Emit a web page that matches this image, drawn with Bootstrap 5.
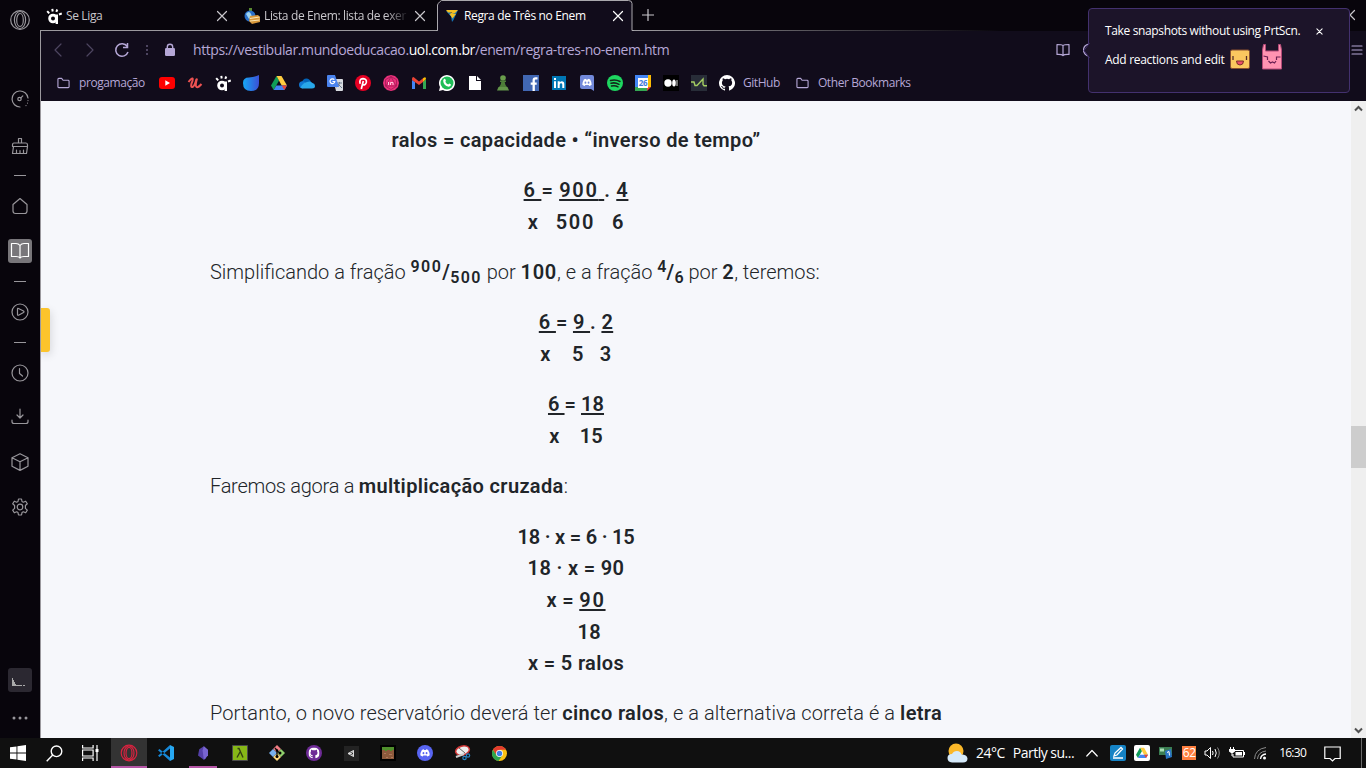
<!DOCTYPE html>
<html lang="pt-BR">
<head>
<meta charset="utf-8">
<meta name="viewport" content="width=device-width, initial-scale=1">
<title>Regra de Três no Enem</title>
<link href="https://cdn.jsdelivr.net/npm/bootstrap@5.3.0/dist/css/bootstrap.min.css" rel="stylesheet">
<style>
body{width:1366px;height:768px;overflow:hidden;background:#08050c;font-family:"Open Sans","Noto Sans",sans-serif;font-size:12px;line-height:16px;letter-spacing:-.36px;color:#fff}
svg{display:block;flex:none}
.ln{fill:none;stroke:currentColor;stroke-width:1.2;stroke-linecap:round;stroke-linejoin:round}
.shell{height:738px}
.rail{width:40px;padding:8px 0 8px 8px;color:#98969b;flex:none}
.rail .it{width:24px;height:24px;display:grid;place-items:center;border-radius:3px;flex:none}
.rail .dash{width:12px;height:1px;background:#98969b;margin:17px 0 18px 6px;flex:none}
.rail .dash.lo{margin-top:18px}
.rail .on{background:#78767a;color:#fff}
.rail .snap{background:#2b2831;color:#aaa}
.g14{margin-top:14px}.g19{margin-top:19px}.g21{margin-top:21px}.g22{margin-top:22px}.g23{margin-top:23px}.g55{margin-top:55px}
.win{width:1326px}
.tabstrip{height:30px;color:#c9c7cc}
.edge{height:1px;background:linear-gradient(90deg,#9b999e 0,#9b999e 600px,transparent 960px)}
.tb{width:198px;height:30px;white-space:nowrap;padding:1px 10px 0 6px}
.tb.cur{width:197px;padding:1px 9px 0 8px;position:relative;z-index:1;color:#fff}
.tb.cur .bgd{position:absolute;left:0;top:0}
.tb.cur>:not(.bgd){position:relative}
.fade-t{width:145px;overflow:hidden;-webkit-mask-image:linear-gradient(90deg,#000 122px,transparent 145px)}
.newtab{padding-left:9px}
.closewin{padding-right:10px}
.frame{border-left:1px solid #9b999e;flex:1;min-height:0}
.addr{height:39px;background:#110c1b;color:#b5a7d6;font-size:14px;letter-spacing:-.4px;padding:0 3px 2px 9px}
.addr .dim{color:#4d4560}
.url{margin-left:17px}
.camera{margin-left:13px}
.menu-ic{margin-left:254px}
.marks{height:31px;background:#110c1b;color:#b5a7d6;padding:0 0 5px 16px;gap:12px;letter-spacing:-.42px}
.marks .lbl{padding-left:9px}
.first-f{margin-right:2px}.last-f{margin-left:4px}
.page{flex:1;min-height:0;background:#f6f7fb}
.view{flex:1;overflow:hidden;position:relative}
.article{margin:23.6px 0 0 169px;width:732px;font-family:Roboto,"Liberation Sans",sans-serif;font-size:20px;line-height:31.6px;letter-spacing:0;font-weight:300;color:#212529;white-space:nowrap}
.article p{margin:0 0 18.8px}
.article b{font-weight:600;letter-spacing:.35px}
.article u{text-underline-offset:2px;text-decoration-thickness:2px;white-space:pre;text-decoration-skip-ink:none}
.article .dg{letter-spacing:.7px}
.article .wide{letter-spacing:1.7px}
.article .tight{letter-spacing:-.2px}
.article .snug{letter-spacing:-.27px}
.article .loose{letter-spacing:.07px}
.article sup,.article sub{font-size:16px;letter-spacing:1.4px}
.article .one sup,.article .one sub{letter-spacing:0}
.article sup{top:-7px}.article sub{bottom:-4px}
.handle{position:absolute;left:0;top:207px;width:9px;height:44px;background:#fcc42c;border-radius:0 3px 3px 0;box-shadow:1px 3px 9px #0002}
.sbar{width:15px;background:#efefef;color:#505050;padding:4px 0 4px}
.thumb{height:42px;background:#cdcdcd;margin-top:314px}
.pop{position:absolute;left:1088px;top:8px;width:262px;height:85px;background:#1c1429;border:1px solid #43316e;border-radius:4px;padding:14px 16px;z-index:5}
.pop .notch{position:absolute;left:-6px;top:33px}
.pop .row2{margin-top:5px}
.pop .row2 span{padding-bottom:2px;letter-spacing:-.3px;margin-right:5px}
.pop .imp{margin-left:10px}
.task{height:30px;background:#101010}
.ti{width:36px;height:30px;display:grid;place-items:center;margin-right:1px;position:relative;flex:none}
.ti.sys{margin-right:0}
.ti.sys.last-s{margin-right:3px}
.ti.act{background:#333;box-shadow:inset 0 -2px #b455a5}
.ti.run::after{content:"";position:absolute;left:4px;width:28px;bottom:0;height:2px;background:#b455a5}
.wx{font-size:14px;letter-spacing:-.5px}
.clock{letter-spacing:-.75px;margin:0 10px 0 2px}
.num{background:#ff7f3f;width:14px;height:14px;line-height:14px;text-align:center}
.tray{gap:8px}
.desk{width:5px;height:30px;border-left:1px solid #6a6a6a;margin-left:12px}
</style>
</head>
<body class="d-flex flex-column position-relative">
<svg class="d-none">
<symbol id="x" viewBox="0 0 12 12"><path class="ln" d="M1.500 1.500l9 9M10.500 1.500l-9 9"/></symbol>
<symbol id="liga" viewBox="0 0 16 16"><circle cx="7" cy="10.500" r="3.400" fill="none" stroke="#fff" stroke-width="2.800"/><path d="M9.600 6.500h2.400V16H9.600z" fill="#fff"/><path d="M1.200 3.200l2 2.200M6.300.8l.4 2.700M11.300 1.500l-1 2.300M13 6.500l2.800-1" stroke="#fff" stroke-width="2"/></symbol>
<symbol id="folder" viewBox="0 0 14 12"><path class="ln" d="M1 10V2q0-1 1-1h3l1.500 2H12q1 0 1 1v6q0 1-1 1H2q-1 0-1-1z"/></symbol>
<symbol id="disc" viewBox="0 0 16 12"><path fill="#fff" d="M3 1Q5 0 6 0l.6 1h2.800L10 0q1.500.1 3 1 2.500 4 2.500 8.500Q14 11 11.500 11.500L10.700 10H5.300l-.8 1.500Q2 11 .5 9.500.5 5 3 1z"/><ellipse cx="5.500" cy="6.200" rx="1.500" ry="1.700" fill="var(--eye)"/><ellipse cx="10.500" cy="6.200" rx="1.500" ry="1.700" fill="var(--eye)"/></symbol>
<symbol id="drive" viewBox="0 0 16 14"><path fill="#0f9d58" d="M5.500 0L0 9.500 2.700 14 8 4.500z"/><path fill="#ffcd40" d="M5.500 0h5L16 9.500h-5.300z"/><path fill="#4285f4" d="M2.700 14l2.600-4.500H16L13.400 14z"/><path fill="#ea4335" d="M10.700 9.500H16L13.400 14z"/></symbol>
<symbol id="git" viewBox="0 0 16 16"><path d="M8 0a8 8 0 0 0-2.530 15.590c.4.07.55-.17.55-.38v-1.490c-2.010.37-2.530-.49-2.690-.94-.09-.23-.48-.94-.82-1.130-.28-.15-.68-.52-.01-.53.63-.01 1.080.58 1.230.82.72 1.210 1.870.87 2.330.66.07-.52.28-.87.51-1.070-1.780-.2-3.640-.89-3.640-3.950 0-.87.31-1.590.82-2.150-.08-.2-.36-1.020.08-2.120 0 0 .67-.21 2.200.82a7.500 7.500 0 0 1 4 0c1.530-1.040 2.200-.82 2.200-.82.44 1.100.16 1.920.08 2.120.51.56.82 1.270.82 2.150 0 3.070-1.870 3.750-3.650 3.950.29.25.54.73.54 1.480v2.190c0 .21.15.46.55.38A8 8 0 0 0 8 0z" fill="#fff"/></symbol>
</svg>

<div class="shell d-flex">
  <nav class="rail d-flex flex-column">
    <div class="it"><svg width="20" height="20" viewBox="0 0 20 20" class="ln"><circle cx="10" cy="10" r="9.300"/><ellipse cx="10" cy="10" rx="5.600" ry="8.500"/><ellipse cx="10" cy="10" rx="3.300" ry="6.500"/></svg></div>
    <div class="it g55"><svg width="18" height="18" viewBox="0 0 18 18" class="ln"><path d="M9 17A8 8 0 1 1 17 8"/><path d="M17 10.500v.1M16.500 13v.1M15 15.500v.1"/><circle cx="8.500" cy="9" r="1.700"/><path d="M9.800 7.800l2-2"/></svg></div>
    <div class="it g23"><svg width="18" height="18" viewBox="0 0 18 18" class="ln"><path d="M7.500 6V1.500h3V6M3 6h12q1.500 0 1.500 2v1.500h-15V8Q1.500 6 3 6zM2.500 9.500L1.500 16.500h14l1-7M5.500 13v3.500M9 13.500v3M12.500 13v3.500"/></svg></div>
    <div class="dash"></div>
    <div class="it"><svg width="18" height="18" viewBox="0 0 18 18" class="ln"><path d="M2 7.500L9 1.500l7 6V14q0 2.500-2.500 2.500h-9Q2 16.500 2 14z"/></svg></div>
    <div class="it on g21"><svg width="20" height="18" viewBox="0 0 20 18" class="ln"><path d="M10 3.500Q8.500 1.500 6 1.500H1.500v13H6q3 0 4 1.500 1-1.500 4-1.500h4.500v-13H14q-2.500 0-4 2zV16"/></svg></div>
    <div class="dash lo"></div>
    <div class="it"><svg width="18" height="18" viewBox="0 0 18 18" class="ln"><circle cx="9" cy="9" r="8"/><path d="M6.500 6Q6.500 5 7.500 5.500L12.500 8q1 .8 0 1.500l-5 2.700q-1 .3-1-.7z"/></svg></div>
    <div class="dash lo"></div>
    <div class="it"><svg width="18" height="18" viewBox="0 0 18 18" class="ln"><circle cx="9" cy="9" r="8"/><path d="M8.500 4.500v5l3 2.500"/></svg></div>
    <div class="it g19"><svg width="18" height="18" viewBox="0 0 18 18" class="ln"><path d="M9 2v8.500M6 8l3 3 3-3M1 13v1.500q0 2 2 2h12q2 0 2-2V13"/></svg></div>
    <div class="it g22"><svg width="18" height="18" viewBox="0 0 18 18" class="ln"><path d="M9 .7l8 4v8.500l-8 4.200-8-4.200V4.700zM1 4.700l8 4 8-4M9 8.700v8.700"/></svg></div>
    <div class="it g21"><svg width="18" height="18" viewBox="0 0 18 18" class="ln"><circle cx="9" cy="9" r="2.800"/><path d="M7.500 1h3l.5 2.500 1.300.7 2.400-1 1.600 2.600-1.900 1.700v2.900l1.900 1.700-1.600 2.700-2.400-1-1.300.8-.5 2.400h-3L7 14.600l-1.300-.8-2.400 1-1.600-2.700 1.900-1.700V7.500L1.700 5.800l1.600-2.600 2.400 1L7 3.500z"/></svg></div>
    <div class="it snap mt-auto"><svg width="16" height="16" viewBox="0 0 16 16"><path fill="currentColor" d="M0 6h1v2h1v2h1v2h1v1h6v1H0zM11 13h2v1h-2z"/></svg></div>
    <div class="it g14"><svg width="16" height="4" viewBox="0 0 16 4" fill="currentColor"><circle cx="2" cy="2" r="1.500"/><circle cx="8" cy="2" r="1.500"/><circle cx="14" cy="2" r="1.500"/></svg></div>
  </nav>

  <main class="win d-flex flex-column">
    <div class="tabstrip d-flex">
      <div class="tb d-flex align-items-center"><svg width="16" height="16"><use href="#liga"/></svg><span class="ms-1">Se Liga</span><svg class="ms-auto" width="12" height="12"><use href="#x"/></svg></div>
      <div class="tb d-flex align-items-center"><svg width="16" height="16" viewBox="0 0 16 16"><path d="M5 0h3v4H5z" fill="#5a8a30"/><circle cx="6" cy="8" r="5.500" fill="#2a6fc8"/><path d="M2 6q3-4 5 0t-2 5z" fill="#9ed4f2"/><path d="M6 8l8-1 2 2v5l-8 2-3-3z" fill="#d8973a"/><path d="M6 10.500l9.500-1.500M6 13l9.500-1" stroke="#fbe6b2"/></svg><span class="ms-1 fade-t">Lista de Enem: lista de exer</span><svg class="ms-auto" width="12" height="12"><use href="#x"/></svg></div>
      <div class="tb cur d-flex align-items-center"><svg class="bgd" width="198" height="31" viewBox="0 0 198 31"><path d="M0 30.500h1.500V5Q2 3.500 3.500 2L5.500.500h187q3.500 0 3.500 3v27H198" fill="#110c1b" stroke="#aaa8ad"/><path d="M2 31h193.500" stroke="#110c1b" stroke-width="2"/></svg><svg width="16" height="16" viewBox="0 0 16 16"><path d="M2 3l5 5.500 1 5.500 1.500-2L14 2l-6 3z" fill="#1673b5"/><path d="M2 2h12l-3 3H8l4 1-3.500 4.500L5.500 6l3-1.500H4z" fill="#f5c022"/></svg><span class="ms-1">Regra de Três no Enem</span><svg class="ms-auto" width="12" height="12"><use href="#x"/></svg></div>
      <div class="newtab d-flex align-items-center"><svg width="12" height="12" viewBox="0 0 12 12" class="ln"><path d="M6 .5v11M.5 6h11"/></svg></div>
      <div class="closewin ms-auto d-flex align-items-center"><svg width="12" height="12"><use href="#x"/></svg></div>
    </div>
    <div class="edge"></div>
    <div class="frame d-flex flex-column">
      <div class="addr d-flex align-items-center">
        <svg class="dim" width="16" height="14" viewBox="0 0 16 14"><path class="ln" d="M11 1L5 7l6 6"/></svg>
        <svg class="dim ms-3" width="16" height="14" viewBox="0 0 16 14"><path class="ln" d="M5 1l6 6-6 6"/></svg>
        <svg class="ms-3" width="16" height="16" viewBox="0 0 16 16"><path d="M13.200 4.300A6.300 6.300 0 1 0 14 10M13.500 1v4.500H9" fill="none" stroke="currentColor" stroke-width="1.500"/></svg>
        <svg class="ms-3 dim" width="2" height="14" viewBox="0 0 2 14"><path d="M0 2h2v2H0zM0 6h2v2H0zM0 10h2v2H0z" fill="currentColor"/></svg>
        <svg class="ms-3" width="12" height="14" viewBox="0 0 12 14"><rect x="1" y="5" width="10" height="8" rx="1.200" fill="currentColor"/><path d="M3.300 6V4a2.700 2.700 0 0 1 5.400 0v2" fill="none" stroke="currentColor" stroke-width="1.400"/></svg>
        <span class="url">https://vestibular.mundoeducacao.<span class="text-white">uol.com.br</span>/enem/regra-tres-no-enem.htm</span>
        <div class="ms-auto d-flex align-items-center">
          <svg width="14" height="14" viewBox="0 0 14 14"><path class="ln" d="M7 2.500Q6 1.500 1 1.500v10q5-.2 6 1 1-1.200 6-1v-10q-5 0-6 1zv10"/></svg>
          <svg class="camera" width="14" height="14" viewBox="0 0 14 14"><circle class="ln" cx="6.500" cy="7" r="6"/></svg>
          <svg class="menu-ic" width="12" height="10" viewBox="0 0 12 10"><path class="ln" d="M1 1h10M1 5h10M1 9h10"/></svg>
        </div>
      </div>
      <div class="marks d-flex align-items-center">
        <span class="first-f d-flex align-items-center"><svg width="13" height="12"><use href="#folder"/></svg><span class="lbl">progamação</span></span>
        <svg width="16" height="16" viewBox="0 0 16 16"><rect y="2" width="16" height="12" rx="3" fill="red"/><path d="M6.300 5.200v5.600L11 8z" fill="#fff"/></svg>
        <svg width="16" height="16" viewBox="0 0 16 16"><path d="M1.500 7q3-4 4-3.500t-1 5q-1 4 1 3.500t4-8M10 3.500Q8 11 9.500 12T14.500 9" fill="none" stroke="#ec5252" stroke-width="2"/></svg>
        <svg width="16" height="16"><use href="#liga"/></svg>
        <svg width="16" height="16" viewBox="0 0 16 16"><defs><linearGradient id="bl"><stop stop-color="#16a8f5"/><stop offset="1" stop-color="#3b4fd5"/></linearGradient></defs><path d="M0 8q0-5.500 6-5.500 6-.5 10-2.500v8q0 8-8 8T0 8z" fill="url(#bl)"/></svg>
        <svg width="16" height="14"><use href="#drive"/></svg>
        <svg width="16" height="16" viewBox="0 0 16 16"><path d="M3 8q.5-4.500 4.500-4.500 3 0 4.500 3.500z" fill="#0364b8"/><circle cx="3.500" cy="9.800" r="3.500" fill="#0f78d4"/><path d="M1.500 12.500Q4 7.500 8 7q3.500-1.500 5.500 1 2.500.5 2.500 3t-3 2.500H3z" fill="#28a8ea"/></svg>
        <svg width="16" height="16" viewBox="0 0 16 16"><path d="M6 4h9q1 0 1 1v10q0 1-1 1H9z" fill="#d8dbe0"/><path d="M10 8h5M12.500 7v1q-.5 3-3 4M11 9l4 4" stroke="#6b7a8c" fill="none"/><path d="M1 0h7l4 12H1q-1 0-1-1V1q0-1 1-1z" fill="#4a83ee"/><path d="M7.300 4.700A2.400 2.400 0 1 0 7.800 6.500H5.500" fill="none" stroke="#fff" stroke-width="1.200"/></svg>
        <svg width="16" height="16" viewBox="0 0 16 16"><circle cx="8" cy="8" r="8" fill="#e60023"/><path d="M5.200 8.800Q3.800 4 8 3.600 12 4 11.300 7.500 10 11 7.500 9.500M8.300 6L6.300 14" fill="none" stroke="#fff" stroke-width="1.700"/></svg>
        <svg width="16" height="16" viewBox="0 0 16 16"><path d="M8 0l4 1 3 3 1 4-1 4-3 3-4 1-4-1-3-3-1-4 1-4 3-3z" fill="#e8307a"/><path d="M8 1.500l5.500 3.200v6.500L8 14.500l-5.500-3.300V4.700zM8 1.500L3 11h10z" fill="none" stroke="#a31a57" stroke-width=".8"/><path d="M5.500 7v3M7.500 10V7.500h2.500V10" stroke="#ffc4da" fill="none"/></svg>
        <svg width="16" height="16" viewBox="0 0 16 16"><path d="M1 5v9h3V7z" fill="#4285f4"/><path d="M12 7v7h3V4z" fill="#34a853"/><path d="M1 3.500Q1 2 2.500 2L8 6.500V10L1 5z" fill="#ea4335"/><path d="M8 6.500L12 3.300V7l-4 3z" fill="#ea4335"/><path d="M12 3.300Q15 1 15 4l-3 3z" fill="#fbbc04"/></svg>
        <svg width="16" height="16" viewBox="0 0 16 16"><path d="M0 16l1-4a8 8 0 1 1 3 3z" fill="#fff"/><circle cx="8" cy="8" r="6.500" fill="#1ebe57"/><path d="M5 4q1-.8 1.700 1l.2 1-.6.800q1 2 2.900 2.600l1-.9 1.800 1q0 2-2.300 2.200Q4.500 10.500 4.200 6 4.200 5 5 4z" fill="#fff"/></svg>
        <svg width="16" height="16" viewBox="0 0 16 16"><path d="M2 1h7v5h5v9H2z" fill="#fff"/><path d="M10 1l4 4h-4z" fill="#fff"/></svg>
        <svg width="16" height="16" viewBox="0 0 16 16"><circle cx="8" cy="3" r="2.800" fill="#6a9e4c"/><path d="M5 5.500h6V7H9.700q.3 3 2.300 5H4q2-2 2.300-5H5z" fill="#4d7c38"/><path d="M3.500 12h9l1.500 3.500H2z" fill="#63954a"/></svg>
        <svg width="16" height="16" viewBox="0 0 16 16"><path d="M0 0h16v16H0z" fill="#4167b2"/><path d="M14.500 3.400h-2q-1.800 0-1.800 1.800V16M7.700 8.700h6" stroke="#fff" stroke-width="2.300" fill="none"/></svg>
        <svg width="16" height="16" viewBox="0 0 16 16"><path d="M1 1h14v14H1z" fill="#0077b5"/><path d="M3 6.300h2V13H3zM3 3h2v2H3zM6.700 6.300h2v1q2-2 4-.4.600.6.600 2V13h-2V9.500q-.2-1.500-1.500-1.300-1 .2-1.100 1.500V13h-2z" fill="#fff"/></svg>
        <svg width="16" height="16" viewBox="0 0 16 16" style="--eye:#7289da"><path d="M1 2q0-2 2-2h10q2 0 2 2v14l-3-2H3q-2 0-2-2z" fill="#7289da"/><use href="#disc" x="3" y="3.500" width="10" height="8"/></svg>
        <svg width="16" height="16" viewBox="0 0 16 16"><circle cx="8" cy="8" r="8" fill="#1ed760"/><path d="M3.500 5.500q5-1.500 9.500 1M4 8.300q4-1.200 8 1M4.500 11q3.500-1 6.500.8" fill="none" stroke="#13251a" stroke-width="1.500" stroke-linecap="round"/></svg>
        <svg width="16" height="16" viewBox="0 0 16 16"><path d="M0 0h13v13H0z" fill="#4285f4"/><path d="M13 0h3v12h-3z" fill="#fbbc04"/><path d="M0 12h12v4H0z" fill="#34a853"/><path d="M12 12h4l-4 4z" fill="#ea4335"/><path d="M3 3h10v10H3z" fill="#fff"/><text x="8" y="11" font-size="8" font-weight="700" text-anchor="middle" fill="#3f78db">26</text></svg>
        <svg width="16" height="16" viewBox="0 0 16 16"><path d="M0 0h16v16H0z"/><circle cx="5" cy="8" r="3.700" fill="#fff"/><ellipse cx="11" cy="8" rx="1.800" ry="3.500" fill="#fff"/><path d="M14 5v6" stroke="#ddd"/></svg>
        <svg width="16" height="16" viewBox="0 0 16 16"><path d="M0 0h16v16H0z" fill="#282d38"/><path d="M0 7h3l1 3.500h2L12 4v5.500l1 1.200h3" fill="none" stroke="#a4ce62" stroke-width="1.400"/></svg>
        <span class="d-flex align-items-center gap-2"><svg width="16" height="16"><use href="#git"/></svg><span>GitHub</span></span>
        <span class="last-f d-flex align-items-center"><svg width="13" height="12"><use href="#folder"/></svg><span class="lbl">Other Bookmarks</span></span>
      </div>
      <div class="page d-flex">
        <div class="view">
          <div class="handle"></div>
          <article class="article">
            <p class="text-center"><b>ralos = capacidade • “inverso de tempo”</b></p>
            <p class="text-center"><b class="dg"><u>6 </u>= <u><span class="wide">900</span> </u>. <u>4</u><br>x&nbsp;&nbsp; <span class="wide">500</span>&nbsp;&nbsp; 6</b></p>
            <p>Simplificando a fração <b><sup>900</sup>/<sub>500</sub></b> por <b class="dg">100</b>, e a fração <b class="one"><sup>4</sup>/<sub>6</sub></b> por <b>2</b>, teremos:</p>
            <p class="text-center"><b><u>6 </u>= <u>9 </u>. <u>2</u><br>x&nbsp;&nbsp;&nbsp; 5&nbsp;&nbsp; 3</b></p>
            <p class="text-center"><b class="loose"><u>6 </u>= <u>18</u><br>x&nbsp;&nbsp;&nbsp; 15</b></p>
            <p><span class="snug">Faremos agora a </span><b>multiplicação cruzada</b>:</p>
            <p class="text-center"><b><span class="tight">18 · x = 6 · 15</span><br>18 · x = 90<br>x = <u class="wide">90</u><br>&nbsp;&nbsp;&nbsp;&nbsp; 18<br>x = 5 ralos</b></p>
            <p class="loose">Portanto, o novo reservatório deverá ter <b>cinco ralos</b>, e a alternativa correta é a <b>letra</b></p>
          </article>
        </div>
        <div class="sbar d-flex flex-column">
          <svg width="15" height="7" viewBox="0 0 15 7"><path d="M4 5.500L7.500 2 11 5.500" fill="none" stroke="currentColor" stroke-width="2"/></svg>
          <div class="thumb"></div>
          <svg class="mt-auto" width="15" height="7" viewBox="0 0 15 7"><path d="M4 1.500L7.500 5 11 1.500" fill="none" stroke="currentColor" stroke-width="2"/></svg>
        </div>
      </div>
    </div>
  </main>
</div>

<div class="pop">
  <svg class="notch" width="7" height="18" viewBox="0 0 7 18"><path d="M6.500 1L1 8.500 6.500 16" fill="#1c1429" stroke="#43316e"/></svg>
  <div class="d-flex align-items-center"><span>Take snapshots without using PrtScn.</span><svg class="ms-3" width="7" height="7" viewBox="0 0 8 8"><path class="ln" d="M1 1l6 6M7 1L1 7"/></svg></div>
  <div class="row2 d-flex align-items-end"><span>Add reactions and edit</span>
    <svg width="22" height="22" viewBox="0 0 22 22"><rect x="1.500" y="2" width="19" height="18.500" rx="1.500" fill="#fbc75f" stroke="#8a5030"/><path d="M4 8v4M17.500 8v4" stroke="#5a3028" stroke-width="1.300"/><path d="M7.500 13h7q0 4-3.500 4t-3.500-4z" fill="#ef4d68" stroke="#7a3028"/></svg>
    <svg class="imp" width="22" height="26" viewBox="0 0 22 26"><path d="M1.500 25V6L2.500.500h2V7h13V.5h2L20.500 6v19z" fill="#ff93b1" stroke="#b44a78"/><path d="M2.500 12l4 1v3M19.500 13h-4v3M7.500 17l2 2 2-1 2 1 1.500-2" stroke="#6b2052" fill="none" stroke-width="1.200"/></svg></div>
</div>

<footer class="task d-flex align-items-center">
  <div class="ti sys"><svg width="16" height="16" viewBox="0 0 16 16" fill="#fff"><path d="M0 2.300L6.500 1.400V7.500H0zM7.400 1.200L16 0v7.500H7.400zM0 8.400h6.500v6.200L0 13.700zM7.400 8.400H16V16l-8.600-1.200z"/></svg></div>
  <div class="ti sys"><svg width="17" height="17" viewBox="0 0 17 17" fill="none" stroke="#fff" stroke-width="1.400"><circle cx="10.500" cy="6.300" r="5.300"/><path d="M6.700 10L.7 16.300"/></svg></div>
  <div class="ti sys last-s"><svg width="17" height="16" viewBox="0 0 17 16" fill="none" stroke="#fff" stroke-width="1.200"><path d="M.6 0v3h10.500V0M.6 16v-3h10.500v3M.6 5h10.500v6H.6zM15 0v16"/><path d="M13.500 4h3v3h-3z" fill="#fff" stroke="none"/></svg></div>
  <div class="ti act"><svg width="18" height="18" viewBox="0 0 18 18" fill="none" stroke="#d8233f" stroke-width="1.200"><circle cx="9" cy="9" r="7.800"/><ellipse cx="9" cy="9" rx="5" ry="7"/><ellipse cx="9" cy="9" rx="3" ry="5.700"/></svg></div>
  <div class="ti"><svg width="16" height="16" viewBox="0 0 16 16"><path d="M12 0l4 2v12l-4 2z" fill="#27a8f2"/><path d="M12 3.500L1.500 12 0 10.700 12 0zM12 12.500L1.500 4 0 5.300 12 16z" fill="#1688d8"/></svg></div>
  <div class="ti run"><svg width="10" height="14" viewBox="0 0 12 16"><path d="M7 0L1.500 3.500 0 11l7 5 2.500-1.500L12 5z" fill="#5440a8"/><path d="M7 0L5.500 5 7 16l5-5V4z" fill="#7864d0"/></svg></div>
  <div class="ti"><svg width="16" height="16" viewBox="0 0 16 16"><path d="M.5.500h15v15H.5z" fill="#86b817" stroke="#4a4a4a"/><path d="M5.500 3.500h1.500l4 9M8 7l-3 5.500" fill="none" stroke="#334212" stroke-width="1.400"/></svg></div>
  <div class="ti"><svg width="16" height="16" viewBox="0 0 16 16"><path d="M8 0l4 4-4 4-4-4z" fill="#f27c83"/><path d="M12 4l4 4-4 4-4-4z" fill="#8fcf6c"/><path d="M8 8l4 4-4 4-4-4z" fill="#ffd97c"/><path d="M4 4l4 4-4 4-4-4z" fill="#78b1ed"/><path d="M6 3l2 2.500V11M8 6l3 2" stroke="#101010" stroke-width="1.300" fill="none"/><circle cx="11" cy="8" r="1.500"/><circle cx="8" cy="11.500" r="1.500"/><circle cx="8" cy="5.500" r="1.300"/></svg></div>
  <div class="ti"><svg width="16" height="16" viewBox="0 0 16 16"><circle cx="8" cy="8" r="8" fill="#6e2b96"/><use href="#git" x="2.500" y="2.500" width="11" height="11"/></svg></div>
  <div class="ti"><svg width="15" height="15" viewBox="0 0 15 15"><path d="M0 0h15v15H0z" fill="#232323"/><path d="M4 7.500L9.500 4.500v6zM4 7.500h3.500l2-3M7.500 7.500l2 3" fill="none" stroke="#ddd"/></svg></div>
  <div class="ti"><svg width="16" height="16" viewBox="0 0 16 16"><path d="M0 0h16v16H0z"/><path d="M2 2h12v12H2z" fill="#8d5a3c"/><path d="M2 2h12v3h-2v1h-2V5H7v1H5V5H2z" fill="#4f8f2c"/><path d="M4 8h2v1H4zM9 9h3v1H9zM6 12h2v1H6zM11 12h2v1h-2z" fill="#b0785a"/></svg></div>
  <div class="ti"><svg width="16" height="16" viewBox="0 0 16 16" style="--eye:#5865f2"><circle cx="8" cy="8" r="8" fill="#5865f2"/><use href="#disc" x="3" y="4" width="10" height="8"/></svg></div>
  <div class="ti"><svg width="17" height="16" viewBox="0 0 17 16"><ellipse cx="8.500" cy="5.500" rx="7" ry="4.500" transform="rotate(-15 8.500 5.500)" fill="#eee" stroke="#cf3535" stroke-width="1.500"/><path d="M5 3l6 5" stroke="#666"/><path d="M2 12l8-3" stroke="#ccc" stroke-width="2"/><circle cx="10.500" cy="13" r="1.700" fill="none" stroke="#2782bf" stroke-width="1.200"/><circle cx="14" cy="10.500" r="1.700" fill="none" stroke="#2782bf" stroke-width="1.200"/></svg></div>
  <div class="ti"><svg width="15" height="15" viewBox="0 0 16 16"><circle cx="8" cy="8" r="8" fill="#fbc116"/><path d="M1 4a8 8 0 0 1 14 0H8L5 10z" fill="#e33b2e"/><path d="M1 4a8 8 0 0 0 6 12l4-6H5z" fill="#2da44e"/><circle cx="8" cy="8" r="3.700" fill="#fff"/><circle cx="8" cy="8" r="2.900" fill="#3f7ee8"/></svg></div>
  <div class="tray d-flex align-items-center ms-auto">
    <svg width="21" height="20" viewBox="0 0 21 20"><circle cx="9" cy="8" r="7.500" fill="#fbb829"/><path d="M5 19.500q-4.500-.5-4.500-4.500T5 11q1.500-3 5-3 3.500 0 4.500 3.500 5.500 0 6 4 0 4-4.500 4z" fill="#d6eafa"/></svg>
    <span class="wx">24°C</span><span class="wx">Partly su...</span>
    <svg class="ms-1" width="12" height="8" viewBox="0 0 12 8"><path class="ln" d="M.8 7L6 1.500 11.200 7"/></svg>
    <svg class="ms-1" width="16" height="16" viewBox="0 0 16 16"><rect width="16" height="16" rx="2" fill="#1583c5"/><path d="M3 13h10M4 11l1-3 6-5.500 1.500 1.500L7 10z" stroke="#fff" fill="none" stroke-width="1.300"/></svg>
    <svg width="16" height="16" viewBox="0 0 16 16"><rect width="16" height="16" rx="2" fill="#fff"/><use href="#drive" x="2" y="2.500" width="12" height="10.500"/></svg>
    <svg width="16" height="14" viewBox="0 0 16 14"><path d="M1 1h13v8H1z" fill="#3b7d52"/><path d="M2 2.500h4v3H2z" fill="#a9dfb5"/><path d="M7 5l6-2 1 8-6 2z" fill="#2a76c5"/><path d="M9 6.500l2-1 .5 4" stroke="#fff" fill="none"/></svg>
    <span class="num">62</span>
    <svg width="17" height="14" viewBox="0 0 17 14" fill="none" stroke="#fff"><path d="M1 5h2l3.500-3.500v11L3 9H1zM8.500 5q1.200 2 0 4M11 3q2.500 4 0 8"/><path d="M13.500 1.500q3.500 5.500 0 11" stroke="#888"/></svg>
    <svg width="16" height="14" viewBox="0 0 16 14"><path d="M5 4.500h9.500v6.500H4V8" fill="none" stroke="#fff"/><path d="M6.500 6H13v3.500H6.500zM14.500 6H16v3h-1.500zM0 3h6v2.500L4 7H2L0 5.500zM1 1h1v2H1zM4 1h1v2H4zM2.500 7h1v3h-1z" fill="#fff"/></svg>
    <svg width="16" height="14" viewBox="0 0 16 14" fill="none"><path d="M1.500 13Q2 3 13 1.500M4.500 13q.5-7 8.500-8" stroke="#8a8a8a"/><path d="M7.500 13Q8 8.500 13 8" stroke="#fff" stroke-width="1.300"/><circle cx="11.500" cy="12" r="1.500" fill="#fff"/></svg>
    <span class="clock">16:30</span>
    <svg width="17" height="17" viewBox="0 0 17 17" fill="none" stroke="#fff" stroke-width="1.200"><path d="M.8 2h15.400v11.500H11L8.500 16 6 13.500H.8z"/></svg>
    <div class="desk"></div>
  </div>
</footer>
<script src="https://cdn.jsdelivr.net/npm/bootstrap@5.3.0/dist/js/bootstrap.bundle.min.js"></script>
</body>
</html>
